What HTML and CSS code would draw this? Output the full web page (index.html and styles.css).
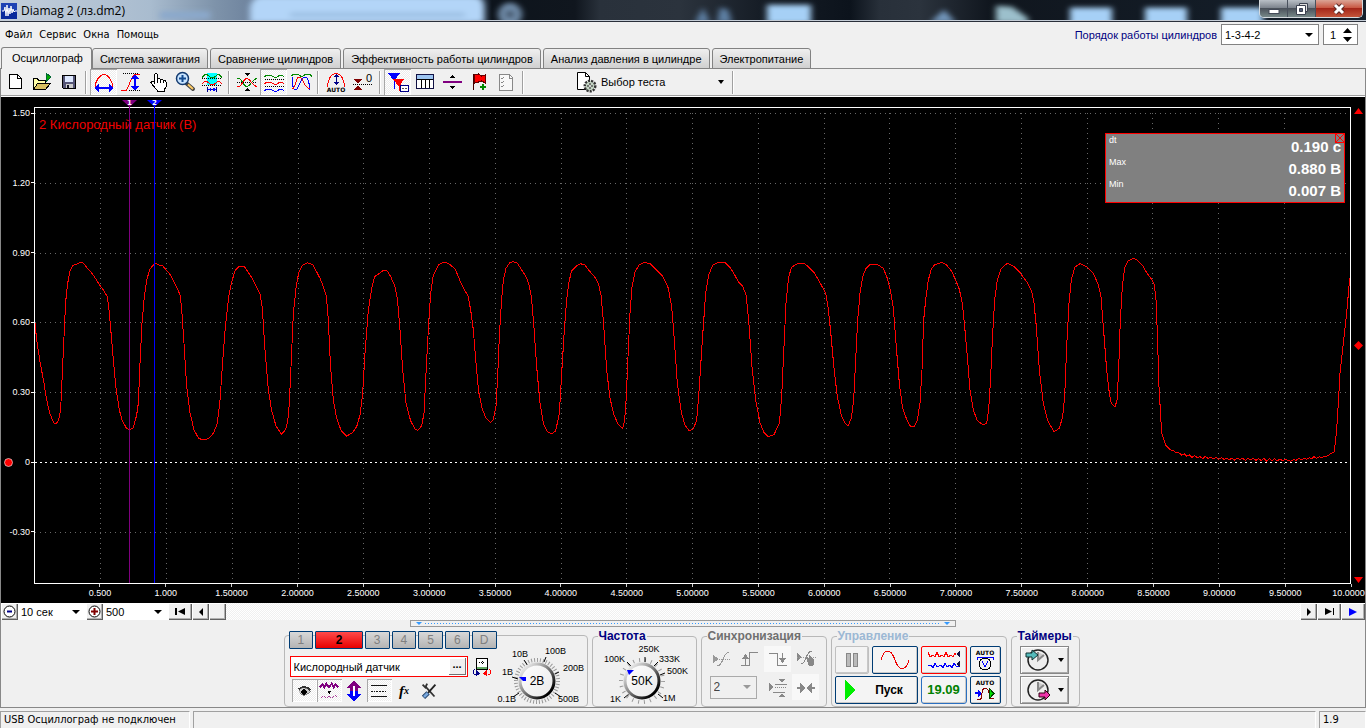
FILE: index.html
```html
<!DOCTYPE html>
<html lang="ru">
<head>
<meta charset="utf-8">
<title>Diamag 2 (лз.dm2)</title>
<link rel="stylesheet" href="styles.css">
</head>
<body>
<div class="window">
  <header class="titlebar">
    <svg class="glass" viewBox="0 0 1366 21" preserveAspectRatio="none">
      <defs><filter id="soft" x="-5%" y="-50%" width="110%" height="200%"><feGaussianBlur stdDeviation="3"/></filter></defs>
      <g filter="url(#soft)">
        <path d="M250 24V8q2-12 14-12h208q12 0 12 12v16z" fill="#b3d5f8"/>
        <rect x="160" y="12" width="50" height="8" fill="#8ba9cc"/>
        <rect x="290" y="13" width="175" height="5" fill="#9cbfe2"/>
        <circle cx="510" cy="15" r="12" fill="#6f8ba8"/><circle cx="510" cy="15" r="4" fill="#3a4c60"/>
        <path d="M695 24l8-16 7 16zM717 24l3-16 8 2 4 14z" fill="#5f81a6"/>
        <rect x="767" y="5" width="44" height="20" fill="#a6d0f6"/>
        <path d="M930 24l14-14 12 14z" fill="#7296bb"/>
        <path d="M996 24V6l16 1 16 12v6z" fill="#9cc0cc"/>
        <rect x="1070" y="8" width="42" height="20" fill="#a6d0f6"/>
        <rect x="1145" y="8" width="42" height="20" fill="#a6d0f6"/>
        <rect x="1221" y="8" width="42" height="20" fill="#a6d0f6"/>
      </g>
    </svg>
    <svg class="app-icon" width="16" height="16" viewBox="0 0 16 16"><rect width="16" height="16" fill="#0a2a9c"/><rect width="16" height="8" fill="#2b54c4" opacity=".6"/><path d="M1 8h2l1-4 1 9 1-11 1 11 1-8 1 6 1-8 1 7 1-4 1 3 1-1h2" fill="none" stroke="#fff"/></svg>
    <span class="title-text">Diamag 2 (лз.dm2)</span>
    <div class="win-buttons">
      <button class="win-btn" aria-label="Свернуть"><svg width="12" height="12" viewBox="0 0 12 12"><rect x="1" y="6.500" width="10" height="4" fill="#fff" stroke="#444b58"/></svg></button>
      <button class="win-btn restore" aria-label="Восстановить"><svg width="14" height="14" viewBox="0 0 14 14"><path d="M4.500 1.500h8v8h-8z" fill="#ddd" stroke="#3c4250"/><path d="M1.500 3.500h9v9h-9z" fill="#fff" stroke="#3c4250"/><path d="M4.500 6.500h3v3h-3z" fill="#56607a" stroke="#3c4250"/></svg></button>
      <button class="win-btn close" aria-label="Закрыть"><svg width="14" height="12" viewBox="0 0 14 12"><path d="M3 2l8 8M11 2l-8 8" stroke="#5a2a26" stroke-width="5"/><path d="M3 2l8 8M11 2l-8 8" stroke="#fff" stroke-width="3"/></svg></button>
    </div>
  </header>

  <div class="menu-row">
    <nav class="menu"><a href="#">Файл</a><a href="#">Сервис</a><a href="#">Окна</a><a href="#">Помощь</a></nav>
    <div class="order">
      <label for="order">Порядок работы цилиндров</label>
      <span class="drop order-drop"><select id="order"><option>1-3-4-2</option></select></span>
      <span class="spin"><input id="cyl" aria-label="Цилиндр" value="1"><svg width="9" height="14" viewBox="0 0 9 14"><path d="M0 5l4.500-5L9 5zM0 9h9l-4.500 5z"/></svg></span>
    </div>
  </div>

  <nav class="tabs">
    <button class="tab active">Осциллограф</button>
    <button class="tab">Система зажигания</button>
    <button class="tab">Сравнение цилиндров</button>
    <button class="tab">Эффективность работы цилиндров</button>
    <button class="tab">Анализ давления в цилиндре</button>
    <button class="tab">Электропитание</button>
  </nav>

  <main class="workspace">
    <div class="toolbar">
      <button class="tool" aria-label="Новый"><svg viewBox="0 0 24 24"><path d="M6.500 4.500h8l4 4v10h-12z" fill="#fff" stroke="#000"/><path d="M14.500 4.500v4h4" fill="none" stroke="#000"/></svg></button>
      <button class="tool" aria-label="Открыть"><svg viewBox="0 0 24 24"><path d="M3.500 19.500v-11h4l1 2h7v3" fill="#ffffa8" stroke="#000"/><path d="M3.500 19.500l4-6h13l-5 6z" fill="#d8c060" stroke="#000"/><path d="M16 3v9l5-5z" fill="#0a0" stroke="#063"/></svg></button>
      <button class="tool" aria-label="Сохранить"><svg viewBox="0 0 24 24"><path d="M5.500 5.500h13v13h-12l-1-1z" fill="#557" stroke="#000"/><path d="M8 6h8v6H8z" fill="#dde8ff"/><path d="M9 14h7v4H9z" fill="#ccc"/><path d="M10 15h2v3h-2z" fill="#112"/></svg></button>
      <i class="sep"></i>
      <button class="tool on" aria-label="Период"><svg viewBox="0 0 24 24"><path d="M3.500 17C3 11 8 4.500 12 4.500S21 11 20.500 17" fill="none" stroke="red"/><path d="M5 18h14" stroke="#00f" stroke-width="2"/><path d="M2 18l5-4v8zM22 18l-5-4v8z" fill="#00f"/></svg></button>
      <button class="tool" aria-label="Амплитуда"><svg viewBox="0 0 24 24"><path d="M2 20.500h5c3-2 4-13 9-16h5" fill="none" stroke="red"/><path d="M4 3.500h15M10 20.500h11" stroke="#000" stroke-dasharray="1 1"/><path d="M16 7v11" stroke="#00f" stroke-width="2"/><path d="M16 4l-4 5h8zM16 21l-4-5h8z" fill="#00f"/></svg></button>
      <button class="tool" aria-label="Рука"><svg viewBox="0 0 24 24"><path d="M8.500 14V4.500l1-1h1l1 1V9l1.500-.5 1.500 1 2 0 1 1 1.500 0 1 1.500v5l-2 3v1.500h-7v-1.500l-4-4.500-2-3 1-1.500 2 .5z" fill="#fff" stroke="#000"/><path d="M11.500 9v4M14.500 10v3M17.500 11v2" stroke="#000"/></svg></button>
      <button class="tool" aria-label="Лупа"><svg class="smooth" viewBox="0 0 24 24"><path d="M13 13l7 6" stroke="#444" stroke-width="4" stroke-linecap="round"/><path d="M15 14.500l5 4.500" stroke="#fc6" stroke-width="2"/><circle cx="9.500" cy="8.500" r="6" fill="#c8e4ff" stroke="#123a70" stroke-width="1.500"/><path d="M9.500 5v7M6 8.500h7" stroke="#124a90" stroke-width="2"/></svg></button>
      <button class="tool" aria-label="Окно"><svg viewBox="0 0 24 24"><path d="M7 3h10v12H7z" fill="#0ff"/><path d="M2 7.500l3-3h2l4 3h3l4-3h1l3 3" fill="none" stroke="#080"/><path d="M2 8.500h20M2 15.500h20" stroke="#000" stroke-dasharray="1 1"/><path d="M2 13.500l3-2h2l4 3h3l4-3h1l3 2" fill="none" stroke="red"/><path d="M7.500 17v5M16.500 17v5M8 19.500h8" stroke="#008"/><path d="M8 19.500l3-2v4zM16 19.500l-3-2v4z" fill="#00f"/></svg></button>
      <i class="sep"></i>
      <button class="tool" aria-label="Центр"><svg viewBox="0 0 24 24"><path d="M9 3h6l-3 3zM9 21h6l-3-3z"/><path d="M2 12.500h20" stroke="#000" stroke-dasharray="1 1"/><path d="M2 8.500h2c4 1 4 8 8 8s4-7 10-8" fill="none" stroke="#080"/><path d="M2 16.500h2c4-1 4-8 8-8s4 7 10 8" fill="none" stroke="red"/></svg></button>
      <button class="tool on" aria-label="Раздельно"><svg viewBox="0 0 24 24"><path d="M2 7l3-2h3l4 2h3l3-2h2l2 2" fill="none" stroke="#080"/><path d="M2 14l3-2h3l4 2h3l3-2h2l2 2" fill="none" stroke="red"/><path d="M2 21l3-2h3l4 2h3l3-2h2l2 2" fill="none" stroke="#00f"/><path d="M3 9.500h19M3 16.500h19" stroke="#000" stroke-dasharray="1 1"/></svg></button>
      <button class="tool" aria-label="Совместно"><svg viewBox="0 0 24 24"><path d="M2 6l3-2h4l4 3 4-3h4l2 3" fill="none" stroke="#080"/><path d="M3.500 7c0 8 0 12 3 13s5-13 9-13 5 6 5 13" fill="none" stroke="#00f"/><path d="M3 19c5-2 3-11 7-12s4 10 11 12" fill="none" stroke="red"/></svg></button>
      <i class="sep"></i>
      <button class="tool" aria-label="Авто"><svg viewBox="0 0 24 24"><path d="M3.500 17C3.500 10 7 3.500 12 3.500S20.500 10 20.500 17" fill="none" stroke="red"/><path d="M12 6v8" stroke="#008"/><path d="M9 7l3-3 3 3zM9 12l3 3 3-3z" fill="#008"/><text x="12" y="22" class="micro">AUTO</text></svg></button>
      <button class="tool" aria-label="Ноль"><svg viewBox="0 0 24 24"><path d="M3 9h8l-4 5zM3 20h8l-4-5z" fill="#800000"/><path d="M2 14.500h20" stroke="#000" stroke-dasharray="1 1"/><text x="18" y="12" class="zero">0</text></svg></button>
      <i class="sep"></i>
      <button class="tool on" aria-label="Измерения"><svg viewBox="0 0 24 24"><path d="M2 3h12L8 11z" fill="#00f"/><path d="M8 10v9" stroke="#00f"/><path d="M7 9h11l-5 8z" fill="red"/><path d="M13 16v5" stroke="red"/><path d="M14.500 15.500h8v6h-8z" fill="#fff" stroke="#008"/><path d="M16 18.500h5" stroke="#555" stroke-dasharray="2 1"/></svg></button>
      <button class="tool" aria-label="Таблица"><svg viewBox="0 0 24 24"><path d="M3.500 4.500h17v14h-17z" fill="#fff" stroke="#114"/><path d="M4 5h16v4H4z" fill="#9cc4f0"/><path d="M4 9.500h16M8.500 9v9M12.500 9v9M16.500 9v9" stroke="#000"/></svg></button>
      <button class="tool" aria-label="Разделитель"><svg viewBox="0 0 24 24"><path d="M3 12h19" stroke="#800080" stroke-width="2"/><path d="M10 8l2.500-3L15 8zM10 16l2.500 3 2.500-3z"/></svg></button>
      <button class="tool" aria-label="Флаг"><svg viewBox="0 0 24 24"><path d="M6.500 4v16" stroke="#400"/><path d="M7.500 5l4-1 3 2 4-1v8l-4-2-3 1-4 1z" fill="red" stroke="#600"/><path d="M16 14v6M13 17h6" stroke="#080" stroke-width="2"/></svg></button>
      <button class="tool" aria-label="Отчёт"><svg viewBox="0 0 24 24"><path d="M5.500 4.500h10l3 3v13h-13z" fill="#f8f8f8" stroke="#888"/><path d="M7 8l1 1 2-2M7 12l1 1 2-2M7 16l1 1 2-2" fill="none" stroke="#888"/><path d="M15.500 5v3h3" fill="none" stroke="#888"/></svg></button>
      <i class="sep"></i>
      <button class="test-btn"><svg width="22" height="22" viewBox="0 0 22 22"><path d="M1.500 1.500h8l4 4v13h-12z" fill="#fff" stroke="#000"/><path d="M9.500 1.500v4h4" fill="none" stroke="#000"/><circle cx="14" cy="15" r="5" fill="#cdc" stroke="#333" stroke-width="3" stroke-dasharray="2 1"/><circle cx="14" cy="15" r="4" fill="#c4d4c4"/><path d="M14 12v6M11 15h6" stroke="#222"/><circle cx="14" cy="15" r="1" fill="#fff"/></svg><span>Выбор теста</span><b class="caret"></b></button>
      <i class="sep"></i>
    </div>

    <section class="scope">
      <ul class="y-axis">
        <li>1.50</li><li>1.20</li><li>0.90</li><li>0.60</li><li>0.30</li>
        <li><svg class="zero-dot" width="9" height="9" viewBox="0 0 9 9"><circle cx="4.500" cy="4.500" r="4" fill="red" stroke="#fff" stroke-width=".6"/></svg>0</li>
        <li>-0.30</li>
      </ul>
      <div class="plot">
        <svg class="grid" width="100%" height="100%">
          <g class="dots">
            <line x1="0" x2="100%" y1="1.200%" y2="1.200%"/><line x1="0" x2="100%" y1="15.900%" y2="15.900%"/><line x1="0" x2="100%" y1="30.600%" y2="30.600%"/><line x1="0" x2="100%" y1="45.100%" y2="45.100%"/><line x1="0" x2="100%" y1="59.900%" y2="59.900%"/><line x1="0" x2="100%" y1="89.300%" y2="89.300%"/>
            <line x1="5%" x2="5%" y1="5" y2="100%"/><line x1="10%" x2="10%" y1="5" y2="100%"/><line x1="15%" x2="15%" y1="5" y2="100%"/><line x1="20%" x2="20%" y1="5" y2="100%"/><line x1="25%" x2="25%" y1="5" y2="100%"/><line x1="30%" x2="30%" y1="5" y2="100%"/><line x1="35%" x2="35%" y1="5" y2="100%"/><line x1="40%" x2="40%" y1="5" y2="100%"/><line x1="45%" x2="45%" y1="5" y2="100%"/><line x1="50%" x2="50%" y1="5" y2="100%"/><line x1="55%" x2="55%" y1="5" y2="100%"/><line x1="60%" x2="60%" y1="5" y2="100%"/><line x1="65%" x2="65%" y1="5" y2="100%"/><line x1="70%" x2="70%" y1="5" y2="100%"/><line x1="75%" x2="75%" y1="5" y2="100%"/><line x1="80%" x2="80%" y1="5" y2="100%"/><line x1="85%" x2="85%" y1="5" y2="100%"/><line x1="90%" x2="90%" y1="5" y2="100%"/><line x1="95%" x2="95%" y1="5" y2="100%"/>
          </g>
          <line class="zero-line" x1="0" x2="100%" y1="74.600%" y2="74.600%"/>
          <svg width="100%" height="100%" viewBox="0 0 3945 1425" preserveAspectRatio="none">
            <g class="trace">
              <path transform="translate(-45 396)" d="M45 250L50 300 60 365 72 430 80 480 90 522 103 552 112 548 119 530 123 485 127 400 132 290 137 185 143 130 150 92 158 76 170 73 180 67 190 69 198 80 210 93 222 108 236 131 250 150 262 170 267 210 272 265 280 360 288 445 298 510 306 540 320 566 330 569 340 563 350 525 355 490 360 370 366 250 373 170 380 120 390 87 400 75 408 70 420 76 428 77 440 92 450 103 462 125 472 145 480 165 485 205 492 310 500 440 510 518 522 570 536 595 550 600 565 596 580 580 592 550 600 480 608 365 616 260 626 170 634 130 645 92 656 80 673 80 682 93 697 116 710 142 720 162 727 205 735 330 745 450 755 512 768 558 785 583 797 568 803 545 808 490 813 380 820 220 828 145 836 98 848 75 862 68 878 74 888 92 900 115 910 140 919 168 925 240 931 370 940 480 950 535 964 573 980 588 998 578 1010 560 1020 525 1028 460 1035 340 1045 210 1055 145 1064 110 1078 100 1090 91 1102 93 1113 112 1125 140 1132 175 1140 270 1148 390 1158 490 1172 543 1185 567 1194 571 1205 557 1212 520 1218 400 1226 250 1232 160 1240 105 1255 75 1270 67 1285 70 1305 86 1320 122"/>
              <path transform="translate(1275 396)" d="M0 122L12 148 24 167 32 210 40 270 48 370 56 455 66 505 78 535 92 547 100 538 108 500 113 410 118 290 124 190 130 120 138 85 150 67 160 65 172 69 185 90 198 110 206 130 214 170 221 250 230 380 240 490 250 550 262 575 275 582 287 573 298 520 305 400 313 270 320 180 327 125 335 92 350 77 361 71 375 75 390 95 405 112 415 130 423 165 430 240 440 390 450 475 462 525 474 552 488 566 494 540 499 470 504 350 510 220 516 140 525 95 538 74 552 68 570 70 585 85 605 105 615 122 625 145 635 200 643 300 652 430 664 518 675 555 688 573 700 567 710 540 717 455 727 300 737 160 746 105 758 76 772 68 795 67 812 85 824 105 835 125 848 138 858 165 866 240 876 380 887 480 900 548 912 578 925 590 942 584 958 550 965 470 971 340 978 190 986 110 995 82 1010 72 1030 69 1045 80 1062 97 1080 128 1097 160 1104 200 1112 275 1122 385 1132 470 1145 530 1155 550 1164 558 1174 535 1181 480 1187 360 1193 240 1200 160 1208 110 1218 85 1232 72 1250 72 1270 85 1282 115 1292 155 1300 205 1308 310 1318 430 1320 447"/>
              <path transform="translate(2595 396)" d="M0 447L8 505 20 538 32 560 42 561 52 540 60 490 66 390 71 240 77 180 85 120 94 87 104 74 118 70 125 67 138 73 155 94 168 123 178 148 187 190 194 260 202 350 210 450 220 510 232 542 249 555 260 550 266 510 271 430 277 300 284 180 292 120 304 85 322 70 340 78 360 98 380 125 395 155 402 190 409 260 418 390 430 490 443 542 462 575 478 565 488 530 494 470 500 320 507 190 514 120 524 82 540 71 560 80 580 100 595 135 603 170 610 260 620 390 628 460 634 490 645 501 651 480 656 390 661 240 667 140 674 83 685 62 700 55 712 60 728 77 740 98 755 118 763 135 768 180 772 280 777 440 785 580 797 615 812 630 820 632 828 639 836 638 845 645 853 642 860 648 868 645 876 652 884 647 892 653 900 650 908 656 916 649 924 655 932 651 940 656 948 652 956 658 964 653 972 658 980 654 988 659 996 654 1004 660 1012 654 1020 659 1028 655 1036 661 1044 655 1052 660 1060 655 1068 661 1076 656 1084 662 1092 655 1100 663 1108 656 1116 663 1124 656 1132 663 1140 657 1148 662 1156 657 1164 661 1172 664 1180 659 1188 661 1196 655 1204 660 1212 655 1220 658 1228 653 1234 657 1242 650 1250 655 1258 650 1266 653 1274 648 1282 648 1292 641 1303 635 1310 570 1315 490 1320 400 1330 310 1340 220 1349 115"/>
            </g>
          </svg>
        </svg>
        <h1 class="channel-name">2 Кислородный датчик (В)</h1>
        <div class="cursor c1"><span>1</span></div>
        <div class="cursor c2"><span>2</span></div>
        <dl class="readout">
          <div><dt>dt</dt><dd>0.190 с</dd></div>
          <div><dt>Max</dt><dd>0.880 В</dd></div>
          <div><dt>Min</dt><dd>0.007 В</dd></div>
          <button class="readout-close" aria-label="Закрыть"><svg width="10" height="10" viewBox="0 0 10 10"><path d="M.5 .5h9v9h-9zM1 1l8 8M9 1l-8 8" fill="none" stroke="red"/></svg></button>
        </dl>
      </div>
      <div class="range">
        <svg width="9" height="6" viewBox="0 0 9 6"><path d="M0 6l4.500-6L9 6z"/></svg>
        <svg width="9" height="9" viewBox="0 0 9 9"><path d="M4.500 0L9 4.500 4.500 9 0 4.500z"/></svg>
        <svg width="9" height="6" viewBox="0 0 9 6"><path d="M0 0h9l-4.500 6z"/></svg>
      </div>
      <ol class="x-axis">
        <li>0.500</li><li>1.000</li><li>1.50000</li><li>2.00000</li><li>2.50000</li><li>3.00000</li><li>3.50000</li><li>4.00000</li><li>4.50000</li><li>5.00000</li><li>5.50000</li><li>6.00000</li><li>6.50000</li><li>7.00000</li><li>7.50000</li><li>8.00000</li><li>8.50000</li><li>9.00000</li><li>9.50000</li><li>10.00000</li>
      </ol>
    </section>

    <div class="scrollbar">
      <button class="sq" aria-label="Уменьшить"><svg width="13" height="13" viewBox="0 0 13 13"><circle cx="6.500" cy="6.500" r="5.500" fill="#fff" stroke="#000"/><path d="M4 6.500h5" stroke="#008" stroke-width="2"/></svg></button>
      <span class="drop flat time-drop"><select aria-label="Длительность"><option>10 сек</option></select></span>
      <button class="sq" aria-label="Увеличить"><svg width="13" height="13" viewBox="0 0 13 13"><circle cx="6.500" cy="6.500" r="5.500" fill="#fff" stroke="#000"/><path d="M3 6.500h7M6.500 3v7" stroke="#800000" stroke-width="2"/></svg></button>
      <span class="drop flat step-drop"><select aria-label="Шаг"><option>500</option></select></span>
      <button class="sq wide" aria-label="В начало"><svg width="11" height="7" viewBox="0 0 11 7"><path d="M0 0h2v7H0zM10 0v7L3 3.500z"/></svg></button>
      <button class="sq" aria-label="Назад"><svg width="4" height="8" viewBox="0 0 4 8"><path d="M4 0v8L0 4z"/></svg></button>
      <button class="sq" aria-label="Ползунок"></button>
      <span class="track"></span>
      <button class="sq" aria-label="Вперёд"><svg width="4" height="8" viewBox="0 0 4 8"><path d="M0 0v8l4-4z"/></svg></button>
      <button class="sq wide" aria-label="В конец"><svg width="11" height="7" viewBox="0 0 11 7"><path d="M9 0h1v7H9zM1 0v7l7-3.500z"/></svg></button>
      <button class="sq wide" aria-label="Воспроизвести"><svg width="8" height="8" viewBox="0 0 8 8"><path d="M0 0v8l8-4z" fill="#00f"/></svg></button>
    </div>

    <div class="splitter"><b></b><i></i><b></b></div>

    <div class="controls">
      <fieldset class="group channel" aria-label="Канал">
        <div class="channel-main">
          <div class="channel-tabs"><button>1</button><button class="sel">2</button><button>3</button><button>4</button><button>5</button><button>6</button><button>D</button></div>
          <div class="sensor-row">
            <span class="sensor"><input aria-label="Датчик" value="Кислородный датчик"><button aria-label="Выбрать датчик">...</button></span>
            <svg class="sharp" width="20" height="20" viewBox="0 0 20 20"><path d="M4.500 1.500h11v11h-11z" fill="#fff" stroke="#000"/><path d="M5 10h10v2H5z" fill="#6a6"/><path d="M7 5.500h5M11 4l-1 4" stroke="#000" stroke-dasharray="1 1"/><path d="M3 12l-2 2 1 3 3 1" fill="none" stroke="#008"/><path d="M4 13l4 3.500-4 3z" fill="#008"/><path d="M17 12l2 2-1 3-2 1" fill="none" stroke="red"/><path d="M15 13l-4 3.500 4 3z" fill="red"/></svg>
          </div>
          <div class="channel-tools">
            <button class="tool on" aria-label="Видимость"><svg viewBox="0 0 24 24"><path d="M6 11c4-4 9-3 13 1-3 5-9 6-12 2" fill="#ccc" stroke="#777"/><path d="M6 10c5-4 10-2 13 1" fill="none" stroke="#333" stroke-width="2"/><circle cx="12" cy="13" r="3"/></svg></button>
            <button class="tool on" aria-label="Фильтр"><svg viewBox="0 0 24 24"><path d="M2 8l3-3 2 3 2-4 3 4 3-4 2 4 2-3 3 3" fill="none" stroke="#800080" stroke-width="2"/><path d="M10 12h5l-2.500 3z"/><path d="M3 20l3-3 3 3 3-3 3 3 3-3 3 2" fill="none" stroke="#a02a90"/></svg></button>
            <button class="tool" aria-label="Сдвиг"><svg viewBox="0 0 24 24"><path d="M12 1l8 8h-4v3H8V9H4z" fill="#800080"/><path d="M12 23l-8-8h4v-3h8v3h4z" fill="#00f"/><path d="M12 7v10" stroke="#fff" stroke-width="2"/></svg></button>
            <button class="tool on" aria-label="Уровни"><svg viewBox="0 0 24 24"><path d="M3 6.500h18M3 18.500h18" stroke="#000"/><path d="M3 12.500h18" stroke="#000" stroke-dasharray="2 1"/></svg></button>
            <button class="tool fx" aria-label="Функция">f<sub>x</sub></button>
            <button class="tool" aria-label="Настройка"><svg class="smooth" viewBox="0 0 24 24"><path d="M8 7l10 11" stroke="#333" stroke-width="2"/><path d="M5 5l3 3 2-4" fill="none" stroke="#333" stroke-width="2"/><path d="M19 5l-8 9" stroke="#222" stroke-width="2"/><path d="M6 19l5-5" stroke="#1b3b63" stroke-width="5"/><path d="M6.500 18.500l4-4" stroke="#79a9df" stroke-width="3"/></svg></button>
          </div>
        </div>
        <svg class="dial" width="90" height="62" viewBox="0 0 90 62">
          <circle cx="40" cy="37" r="21" fill="none" stroke="#999" stroke-width="4" stroke-dasharray="1 2" pathLength="132"/>
          <path d="M16 53l6-4M15 33l6 2M27 16l4 6M49 13l-2 5M62 28l-6 3M64 53l-6-4" stroke="#000"/>
          <circle cx="40" cy="37" r="19" fill="#eee"/>
          <circle cx="40" cy="37" r="17" fill="url(#face)" stroke="url(#rim)" stroke-width="3"/>
          <path d="M22 33h7v4h-3z" fill="#00f"/>
          <text x="40" y="41" class="dial-value">2В</text>
          <text x="19" y="58" class="end">0.1В</text><text x="16" y="31" class="end">1В</text><text x="31" y="13" class="end">10В</text><text x="48" y="10">100В</text><text x="66" y="27">200В</text><text x="61" y="58">500В</text>
        </svg>
      </fieldset>

      <fieldset class="group freq">
        <legend>Частота</legend>
        <svg class="dial" width="98" height="62" viewBox="0 0 98 62">
          <defs>
            <linearGradient id="rim" x1="0" y1="0" x2="1" y2="1"><stop offset=".15" stop-color="#e0e0e0"/><stop offset=".5" stop-color="#777"/><stop offset=".85" stop-color="#000"/></linearGradient>
            <linearGradient id="face" x1="0" y1="0" x2="1" y2="1"><stop offset="0" stop-color="#fff"/><stop offset="1" stop-color="#e8e8e8"/></linearGradient>
          </defs>
          <circle cx="46" cy="37" r="21" fill="none" stroke="#999" stroke-width="4" stroke-dasharray="1 5" pathLength="132"/>
          <path d="M28 54l5-4M31 18l4 4M49 13v5M62 18l-4 4M69 29l-5 2M67 54l-5-4" stroke="#000"/>
          <circle cx="46" cy="37" r="19" fill="#eee"/>
          <circle cx="46" cy="37" r="17" fill="url(#face)" stroke="url(#rim)" stroke-width="3"/>
          <path d="M31 26h7l-5 5z" fill="#00f"/>
          <text x="46" y="41" class="dial-value">50K</text>
          <text x="25" y="58" class="end">1K</text><text x="29" y="18" class="end">100K</text><text x="53" y="8" class="mid">250K</text><text x="63" y="18">333K</text><text x="71" y="30">500K</text><text x="67" y="57">1M</text>
        </svg>
      </fieldset>

      <fieldset class="group sync" disabled>
        <legend>Синхронизация</legend>
        <div class="sync-row">
          <button class="tool" aria-label="Авто"><svg viewBox="0 0 24 24"><path d="M4 8l6 4-6 4z" fill="#999"/><path d="M4 12.500h18" stroke="#999" stroke-dasharray="1 1"/><path d="M8 19c6 1 6-14 12-14" fill="none" stroke="#999"/></svg></button>
          <button class="tool" aria-label="Фронт"><svg viewBox="0 0 24 24"><path d="M4 18.500h8.500V5.500H21M8.500 18V9" fill="none" stroke="#888"/><path d="M5 12l3.500-5 3.500 5z" fill="#888"/></svg></button>
          <button class="tool lit" aria-label="Спад"><svg viewBox="0 0 24 24"><path d="M3 6.500h8.500v12H21M16.500 6v9" fill="none" stroke="#888"/><path d="M13 11l3.500 5 3.500-5z" fill="#888"/></svg></button>
          <button class="tool" aria-label="Ручная"><svg viewBox="0 0 24 24"><path d="M3 6l5 4-5 4z" fill="#888"/><path d="M3 10.500h19" stroke="#999" stroke-dasharray="1 1"/><path d="M7 17c6 0 4-13 11-13" fill="none" stroke="#888"/><path d="M12 10l3 1v-3l5 5v4l-2 2h-3z" fill="#888"/></svg></button>
          <span class="drop sync-drop"><select aria-label="Канал синхронизации"><option>2</option></select></span>
          <button class="tool" aria-label="Уровень"><svg viewBox="0 0 24 24"><path d="M3 8l4 4-4 4z" fill="#888"/><path d="M9 9.500h12M7 17.500h12" stroke="#888"/><path d="M9 12.500h12" stroke="#888" stroke-dasharray="1 1"/><path d="M13 4h6l-3 4zM13 22h6l-3-4z" fill="#888"/></svg></button>
          <button class="tool lit" aria-label="Сжать"><svg viewBox="0 0 24 24"><path d="M3 13h7M14 13h7" stroke="#888" stroke-width="2"/><path d="M6 8l6 5-6 5zM18 8l-6 5 6 5z" fill="#888"/></svg></button>
        </div>
      </fieldset>

      <fieldset class="group control">
        <legend>Управление</legend>
        <div class="control-grid">
          <button class="raised off" aria-label="Пауза"><svg width="14" height="16" viewBox="0 0 14 16"><path d="M1.500 1.500h4v13h-4zM8.500 1.500h4v13h-4z" fill="#bbb" stroke="#888"/></svg></button>
          <button class="raised" aria-label="Синус"><svg width="30" height="20" viewBox="0 0 30 20"><path d="M1 10C4-2 11-2 15 10s11 11 14 0" fill="none" stroke="#e00"/></svg></button>
          <button class="raised alert" aria-label="Сигналы"><svg width="36" height="20" viewBox="0 0 36 20"><path d="M2 2l2 5 3-2 2 2 2-5 2 5 3-2 2 2 2-5 2 5 3-2 2 2 2-4 1 2" fill="none" stroke="red"/><path d="M2 15h3l2 3 2-5 2 4 4-2 2 3 2-5 2 4 3-2 2 3 2-5 2 3h3" fill="none" stroke="#00f"/><path d="M34 1v6l-4-3zM34 11v6l-4-3z" fill="#114"/></svg></button>
          <button class="raised" aria-label="Авто вольтметр"><svg width="22" height="24" viewBox="0 0 22 24"><text x="11" y="7" class="auto">AUTO</text><path d="M3 9.500h16M3 9v3M19 9v3" fill="none" stroke="#00f"/><circle cx="11" cy="16" r="6" fill="#eee" stroke="#000"/><path d="M8 13l3 6 3-6" fill="none" stroke="#00f"/></svg></button>
          <button class="raised start"><svg width="10" height="20" viewBox="0 0 10 20"><path d="M0 0v20l10-10z" fill="#0e0"/></svg><span>Пуск</span></button>
          <button class="raised count">19.09</button>
          <button class="raised" aria-label="Авто пуск"><svg width="22" height="24" viewBox="0 0 22 24"><text x="11" y="7" class="auto">AUTO</text><path d="M1 14h3v-3l4 4.500-4 4.500v-4H1z" fill="#00f"/><path d="M3 21c5 2 5-2 5-6 0-6 6-6 7 0s2 6 5 6" fill="none" stroke="#800"/><path d="M15 10v11l5-5.500z" fill="#0d0" stroke="#040"/></svg></button>
        </div>
      </fieldset>

      <fieldset class="group timers">
        <legend>Таймеры</legend>
        <button class="timer" aria-label="Таймер пуска"><svg width="26" height="24" viewBox="0 0 26 24"><circle cx="13" cy="12" r="10" fill="#eee" stroke="#222" stroke-width="1.500"/><path d="M13 4v8l6-5" fill="#ccc" stroke="#888" stroke-width="2"/><path d="M1 5h6V2l6 5-6 5V9H1z" fill="#5bb" stroke="#133"/></svg><b class="caret"></b></button>
        <button class="timer" aria-label="Таймер остановки"><svg width="26" height="24" viewBox="0 0 26 24"><circle cx="13" cy="12" r="10" fill="#eee" stroke="#222" stroke-width="1.500"/><path d="M13 4v8l6-5" fill="#ccc" stroke="#888" stroke-width="2"/><path d="M14 15h6v-3l5 5-5 5v-3h-6z" fill="#e3a" stroke="#301"/></svg><b class="caret"></b></button>
      </fieldset>
    </div>
  </main>

  <footer class="status"><span class="st-msg">USB Осциллограф не подключен</span><span class="st-mid"></span><span class="st-ver">1.9</span></footer>
</div>
</body>
</html>
```
FILE: styles.css
```css
* { box-sizing: border-box; }
body { margin: 0; font: 11px/14px "Liberation Sans", Arial, sans-serif; color: #000; background: #f0f0f0; }
button, input, select { font: inherit; color: inherit; border: 0; padding: 0; margin: 0; background: none; border-radius: 0; }
ul, ol, dl, dd, h1 { margin: 0; padding: 0; list-style: none; }
.window { height: 100vh; display: flex; flex-direction: column; overflow: hidden; }

/* Title bar */
.titlebar {
  height: 22px; flex: none; display: flex; align-items: center; position: relative;
  border-bottom: 1px solid #2a2f3a;
  background: linear-gradient(90deg, #c3cedb 0, #a9bccf 150px, #7e93aa 215px, #7186a0 245px, #5d7590 300px, #5d7590 470px, #0d141c 492px, #10161e 575px, #29313b 600px, #2b333d 680px, #161d26 760px, #0c131c 850px, #28303a 880px, #2b333d 920px, #10161e 990px, #15202c 100%);
}
.glass { position: absolute; inset: 0; width: 100%; height: 100%; border-bottom: 1px solid #c4ccd6; }
.titlebar > :not(.glass) { position: relative; }
.app-icon { margin-left: 1px; flex: none; }
.title-text { margin-left: 4px; font: 12px/16px "Open Sans", sans-serif; }
.win-buttons { margin-left: auto; margin-right: 3px; align-self: flex-start; display: flex; height: 18px; border: 1px solid #d5dade; border-top: 0; border-radius: 0 0 5px 5px; overflow: hidden; }
.win-btn { width: 28px; display: flex; align-items: center; justify-content: center; border-right: 1px solid #49515d; background: linear-gradient(#b9bfc6, #7a818a 48%, #4b525b 50%, #788); }
.win-btn.close { width: 46px; border-right: 0; background: linear-gradient(#dba596, #c8543f 48%, #a5281a 50%, #c3553a); }

/* Menu */
.menu-row { flex: none; height: 25px; display: flex; justify-content: space-between; align-items: center; }
.menu { display: flex; gap: 7px; padding: 1px 0 0 5px; font: 11px/14px "DejaVu Sans Condensed", sans-serif; }
.menu a { color: #000; text-decoration: none; }
.order { display: flex; align-items: center; gap: 4px; padding-right: 8px; color: #000080; }
.drop { position: relative; display: inline-flex; color: #000; }
.drop select { appearance: none; width: 100%; padding-left: 3px; background: #fff; border: 1px solid #828282; }
.drop::after { content: ""; position: absolute; right: 6px; top: 50%; margin-top: -2px; border: 4px solid transparent; border-top-color: #000; border-bottom: 0; pointer-events: none; }
.order-drop { width: 98px; height: 21px; }
.spin { width: 35px; height: 21px; display: flex; align-items: center; background: #fff; border: 1px solid #828282; color: #000; }
.spin input { width: 19px; padding-left: 6px; }

/* Tabs */
.tabs { flex: none; height: 22px; display: flex; align-items: flex-end; gap: 2px; box-shadow: inset 0 -1px #888; padding-left: 1px; }
.tab { height: 21px; padding: 0 7px; border: 1px solid #828282; border-radius: 3px 3px 0 0; background: linear-gradient(#efefef, #d0d0d0); white-space: nowrap; }
.tab.active { height: 22px; padding: 0 8px 2px 10px; margin-right: -2px; background: #f0f0f0; border-bottom: 0; }

/* Workspace */
.workspace { flex: 1; min-height: 0; display: flex; flex-direction: column; border: 1px solid #888; border-top: 0; }
.toolbar { flex: none; height: 27px; display: flex; align-items: center; border-bottom: 1px solid #a0a0a0; }
.tool { width: 27px; height: 26px; flex: none; display: flex; align-items: center; justify-content: center; }
.tool svg { width: 24px; height: 24px; shape-rendering: crispEdges; }
.tool svg.smooth { shape-rendering: auto; }
.sharp { shape-rendering: crispEdges; }
.tool.on { background: repeating-conic-gradient(#fff 0 25%, #ececec 0 50%) 0 0 / 2px 2px; box-shadow: inset 1px 1px #a8a8a8, inset -1px -1px #fff; }
.sep { width: 2px; height: 23px; flex: none; margin: 0 3px; border-left: 1px solid #a0a0a0; border-right: 1px solid #fff; }
.micro { font: bold 6px "DejaVu Sans", sans-serif; text-anchor: middle; }
.zero { font: 11px "Liberation Sans", sans-serif; text-anchor: middle; }
.test-btn { width: 202px; height: 26px; padding: 0 5px 0 49px; display: flex; align-items: center; gap: 3px; }
.caret { border: 4px solid transparent; border-top-color: #000; border-bottom: 0; border-left-width: 3px; border-right-width: 3px; }
.test-btn .caret { margin-left: auto; }

/* Oscilloscope */
.scope { flex: 1; min-height: 0; background: #000; color: #fff; display: grid; grid-template-columns: 33px 1fr 14px; grid-template-rows: 1fr 19px; padding-top: 10px; overflow: hidden; font-size: 9px; line-height: 14px; border-top: 1px solid #fff; }
.y-axis { display: flex; flex-direction: column; justify-content: space-between; padding-bottom: 45px; margin-top: -1px; }
.y-axis li { display: flex; align-items: center; justify-content: flex-end; gap: 1px; }
.y-axis li::after { content: ""; width: 3px; height: 1px; background: #fff; }
.zero-dot { margin-right: auto; margin-left: 3px; }
.plot { position: relative; border: 1px solid #fff; min-width: 0; }
.grid { position: absolute; inset: 0; display: block; }
.dots line { stroke: #686868; stroke-dasharray: 1 4; shape-rendering: crispEdges; }
.zero-line { stroke: #fff; stroke-dasharray: 2 3; shape-rendering: crispEdges; }
.trace path { fill: none; stroke: #f00; stroke-width: 1px; vector-effect: non-scaling-stroke; shape-rendering: crispEdges; }
.channel-name { position: absolute; left: 4px; top: 10px; font: 13px/14px "Liberation Sans", sans-serif; color: #f00000; }
.cursor { position: absolute; top: -8px; bottom: 0; width: 1px; }
.cursor span { position: absolute; top: 0; left: -7px; width: 15px; height: 7px; clip-path: polygon(0 0, 100% 0, 50% 100%); font: bold 7px/7px "DejaVu Sans", sans-serif; text-align: center; }
.c1, .c1 span { background: #800080; }
.c1 { left: 7.150%; }
.c2, .c2 span { background: #00f; }
.c2 { left: 9.050%; }
.readout { position: absolute; right: 5px; top: 25px; width: 240px; background: #808080; border: 1px solid red; padding: 2px 3px 0; }
.readout div { display: flex; justify-content: space-between; height: 22px; }
.readout dt { font-size: 9px; line-height: 9px; }
.readout dd { font: bold 15px/22px "Liberation Sans", sans-serif; }
.readout-close { position: absolute; right: -1px; top: -1px; width: 10px; height: 10px; background: #808080; display: flex; }
.readout-close svg { shape-rendering: crispEdges; }
.range { display: flex; flex-direction: column; justify-content: space-between; align-items: center; padding: 1px 0; fill: red; }
.x-axis { grid-column: 1 / -1; display: grid; grid-template-columns: repeat(20, 1fr); margin-left: 66px; margin-right: -19px; text-align: center; line-height: 12px; }
.x-axis li { display: flex; flex-direction: column; align-items: center; }
.x-axis li::before { content: ""; width: 1px; height: 3px; background: #ccc; }

/* Scroll strip */
.scrollbar { flex: none; height: 17px; display: flex; background: #fff; }
.sq { width: 17px; height: 17px; flex: none; display: flex; align-items: center; justify-content: center; background: #f0f0f0; box-shadow: inset 1px 1px #fff, inset -1px -1px #606060, inset -2px -2px #b0b0b0; }
.sq.wide { width: 24px; }
.flat select { border: 0; height: 17px; }
.time-drop { width: 68px; }
.step-drop { width: 65px; }
.track { flex: 1; background: repeating-conic-gradient(#fff 0 25%, #f0f0f0 0 50%) 0 0 / 2px 2px; }

.splitter { flex: none; align-self: center; width: 546px; max-width: 100%; height: 7px; border: 1px solid #999; display: flex; align-items: center; gap: 3px; padding: 0 5px; }
.splitter b { border: 3px solid transparent; border-top-color: #3399ff; border-bottom: 0; }
.splitter i { flex: 1; height: 1px; background: repeating-linear-gradient(90deg, #39f 0 1px, transparent 1px 3px); }

/* Control groups */
.controls { flex: none; height: 80px; display: flex; justify-content: center; align-items: flex-end; gap: 4px; padding-right: 3px; }
.group { margin: 0; border: 1px solid #b8b8b8; border-radius: 4px; padding: 0; height: 78px; min-width: 0; }
.group legend { margin-left: 5px; padding: 0 1px; font-size: 12px; font-weight: bold; line-height: 14px; color: #000080; }
.channel { width: 304px; height: 72px; display: flex; justify-content: space-between; }
.channel-main { margin: -5px 0 0 4px; width: 208px; }
.channel-tabs { display: flex; gap: 2px; font-size: 12px; }
.channel-tabs button { width: 25px; height: 18px; border: 1px solid #003c74; border-radius: 1px; color: #808080; background: linear-gradient(#d8d8d8, #b4b4b4); }
.channel-tabs .sel { width: 48px; color: #000; font-weight: bold; background: linear-gradient(#ff4a4a, #e80000); }
.sensor-row { display: flex; align-items: center; gap: 4px; margin-top: 7px; padding-left: 1px; }
.sensor { width: 178px; height: 21px; display: flex; border: 1px solid red; background: #fff; }
.sensor input { flex: 1; min-width: 0; padding-left: 3px; }
.sensor button { width: 17px; margin: 1px; line-height: 8px; padding-bottom: 5px; font-weight: bold; background: #f0f0f0; box-shadow: inset -1px -1px #707070, inset 1px 1px #fff; }
.channel-tools { display: flex; margin-top: 2px; padding-left: 3px; }
.channel-tools .tool { width: 25px; height: 23px; }
.channel-tools .tool svg { width: 22px; height: 22px; }
.tool.fx { font: italic bold 15px/16px "Liberation Serif", serif; }
.fx sub { font-size: 10px; }
.dial { display: block; flex: none; font: 9px "Liberation Sans", sans-serif; }
.channel .dial { margin: 8px 0 0; }
.dial-value { font-size: 12px; text-anchor: middle; }
.end { text-anchor: end; }
.mid { text-anchor: middle; }
.freq { width: 105px; }
.freq .dial { margin: 1px 0 0 3px; }
.sync { width: 126px; color: #808080; }
.group.sync legend { color: #707070; }
.sync-row { display: grid; grid-template-columns: repeat(4, 27px); justify-content: space-between; align-items: center; row-gap: 2px; padding: 3px 6px 0; }
.lit { background: #f8f8f8; }
.sync-drop { grid-column: span 2; width: 47px; height: 23px; margin-left: 2px; }
.sync-drop select { background: #f0f0f0; opacity: 1; color: #444; border-color: #aaa; font-size: 12px; }
.sync-drop::after { border-top-color: #999; }
.control { width: 176px; }
.group.control legend { color: #9cb8d4; }
.control-grid { display: grid; grid-template-columns: 34px 46px 46px 31px; grid-auto-rows: 28px; gap: 2px 3px; padding: 3px 3px 0; }
.raised { display: flex; align-items: center; justify-content: center; border: 1px solid #003c74; border-radius: 2px; background: #f4f4f4; box-shadow: inset -1px -1px #c8c8c8; }
.raised svg { shape-rendering: crispEdges; }
.raised.off { border-color: #c0c0c0; }
.raised.alert { border-color: red; }
.raised.start { grid-column: span 2; font-weight: bold; gap: 20px; padding-right: 4px; font-size: 12px; }
.raised.count { font-weight: bold; font-size: 13px; color: #008000; border-color: #2a6fc0; border-radius: 3px; }
.auto { font: bold 6px "DejaVu Sans", sans-serif; text-anchor: middle; }
.timers { width: 69px; }
.timer { width: 49px; height: 28px; display: flex; align-items: center; justify-content: center; gap: 7px; margin: 3px 0 0 8px; background: #f0f0f0; border: 1px solid #888; box-shadow: inset 1px 1px #fff, inset -1px -1px #aaa; }
.timer + .timer { margin-top: 2px; }

/* Status bar */
.status { flex: none; height: 20px; padding-top: 3px; display: flex; gap: 3px; font: 11px/14px "DejaVu Sans Condensed", sans-serif; }
.status span { border: 1px solid #a0a0a0; border-right-color: #fff; border-bottom: 0; padding: 1px 3px 0; white-space: nowrap; }
.st-msg { width: 190px; }
.st-mid { flex: 1; }
.st-ver { width: 47px; }
```
